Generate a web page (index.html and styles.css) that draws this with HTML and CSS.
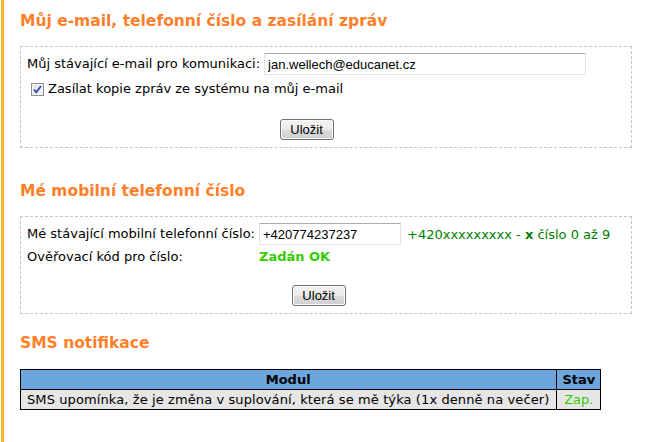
FILE: index.html
```html
<!DOCTYPE html>
<html lang="cs">
<head>
<meta charset="utf-8">
<title>Nastavení</title>
<link rel="stylesheet" href="styles.css">
</head>
<body>
<div class="page">
  <h2 class="title first">Můj e-mail, telefonní číslo a zasílání zpráv</h2>
  <div class="box box-mail">
    <div class="form">
      <label class="lbl" for="mail">Můj stávající e-mail pro komunikaci:</label>
      <input id="mail" class="txt mail" type="text" value="jan.wellech@educanet.cz">
      <label class="check full">
        <span class="cb"><svg width="9" height="9" viewBox="0 0 9 9"><path d="M1 4.6 L3.4 7.4 L8 1" fill="none" stroke="#2b4ba6" stroke-width="1.8"/></svg></span>
        Zasílat kopie zpráv ze systému na můj e-mail
      </label>
      <div class="actions full"><button class="btn" type="button">Uložit</button></div>
    </div>
  </div>

  <h2 class="title second">Mé mobilní telefonní číslo</h2>
  <div class="box box-tel">
    <div class="form">
      <label class="lbl" for="tel">Mé stávající mobilní telefonní číslo:</label>
      <div class="telrow">
        <input id="tel" class="txt tel" type="text" value="+420774237237">
        <span class="hint">+420xxxxxxxxx - <b>x</b> číslo 0 až 9</span>
      </div>
      <span class="lbl">Ověřovací kód pro číslo:</span>
      <span class="ok">Zadán OK</span>
      <div class="actions full tel-actions"><button class="btn" type="button">Uložit</button></div>
    </div>
  </div>

  <h2 class="title last">SMS notifikace</h2>
  <table class="grid">
    <thead>
      <tr><th>Modul</th><th>Stav</th></tr>
    </thead>
    <tbody>
      <tr><td>SMS upomínka, že je změna v suplování, která se mě týka (1x denně na večer)</td><td class="on">Zap.</td></tr>
    </tbody>
  </table>
</div>
</body>
</html>
```

FILE: styles.css
```css
html, body {
  margin: 0;
  padding: 0;
  background: #fff;
}
body {
  font-family: "DejaVu Sans", Verdana, sans-serif;
  font-size: 13px;
  color: #000;
}
.page {
  margin-left: 1px;
  border-left: 3px solid #f6b42c;
  padding: 1px 18px 30px 16px;
  min-height: 411px;
}
.title {
  margin: 0;
  font-size: 15.5px;
  font-weight: bold;
  color: #ff7f2a;
  line-height: 20px;
}
.title.first {
  padding-top: 10px;
}
.title.second {
  padding-top: 33px;
}
.title.last {
  padding-top: 19px;
}
.box {
  margin-top: 15px;
  border: 1px dashed #c4c4c4;
  padding: 6px 6px 7px 6px;
}
.box.box-tel {
  margin-top: 15px;
  padding-bottom: 7px;
}
.form {
  display: inline-grid;
  grid-template-columns: auto auto;
  column-gap: 4px;
  row-gap: 2px;
  align-items: center;
}
.full {
  grid-column: 1 / span 2;
}
.lbl {
  white-space: nowrap;
  line-height: 20px;
}
.txt {
  font-family: "Liberation Sans", Arial, sans-serif;
  font-size: 13px;
  color: #000;
  height: 22px;
  box-sizing: border-box;
  margin: 0;
  padding: 1px 3px;
  border: 1px solid #e2e3ea;
  border-top-color: #abadb3;
  outline: none;
}
.mail {
  width: 322px;
}
.tel {
  width: 142px;
}
.telrow {
  display: flex;
  align-items: center;
  gap: 6px;
}
.hint {
  color: #008000;
  white-space: nowrap;
}
.ok {
  color: #33cc00;
  font-weight: bold;
  line-height: 20px;
}
.check {
  display: flex;
  align-items: center;
  gap: 4px;
  padding-left: 4px;
  margin-top: 3px;
  line-height: 18px;
}
.cb {
  width: 11px;
  height: 11px;
  border: 1px solid #8e8f8f;
  background: linear-gradient(135deg, #dcdcdc, #fafafa);
  display: flex;
  align-items: center;
  justify-content: center;
  box-shadow: inset 0 0 0 1px #f4f4f4;
}
.cb svg {
  display: block;
}
.actions {
  display: flex;
  justify-content: center;
  margin-top: 19px;
}
.actions.tel-actions {
  margin-top: 16px;
}
.btn {
  font-family: "Liberation Sans", Arial, sans-serif;
  font-size: 13px;
  color: #000;
  height: 21px;
  width: 54px;
  padding: 0;
  border: 1px solid #707070;
  border-radius: 3px;
  background: linear-gradient(#f2f2f2 0%, #ebebeb 50%, #dddddd 51%, #cfcfcf 100%);
  box-shadow: inset 0 0 0 1px #fcfcfc;
}
.grid {
  margin-top: 16px;
  border-collapse: collapse;
  border: 1px solid #000;
}
.grid th, .grid td {
  border: 1px solid #000;
  padding: 0 7px 0 6px;
  height: 19px;
  white-space: nowrap;
}
.grid td {
  letter-spacing: 0.1px;
  background: #e6e6e6;
}
.grid th {
  background: #6ca6dc;
  font-weight: bold;
  text-align: center;
}
.grid th:last-child, .grid td.on {
  padding: 0 5px;
  letter-spacing: 0;
}
.grid td.on {
  color: #33cc00;
  text-align: center;
}
```
